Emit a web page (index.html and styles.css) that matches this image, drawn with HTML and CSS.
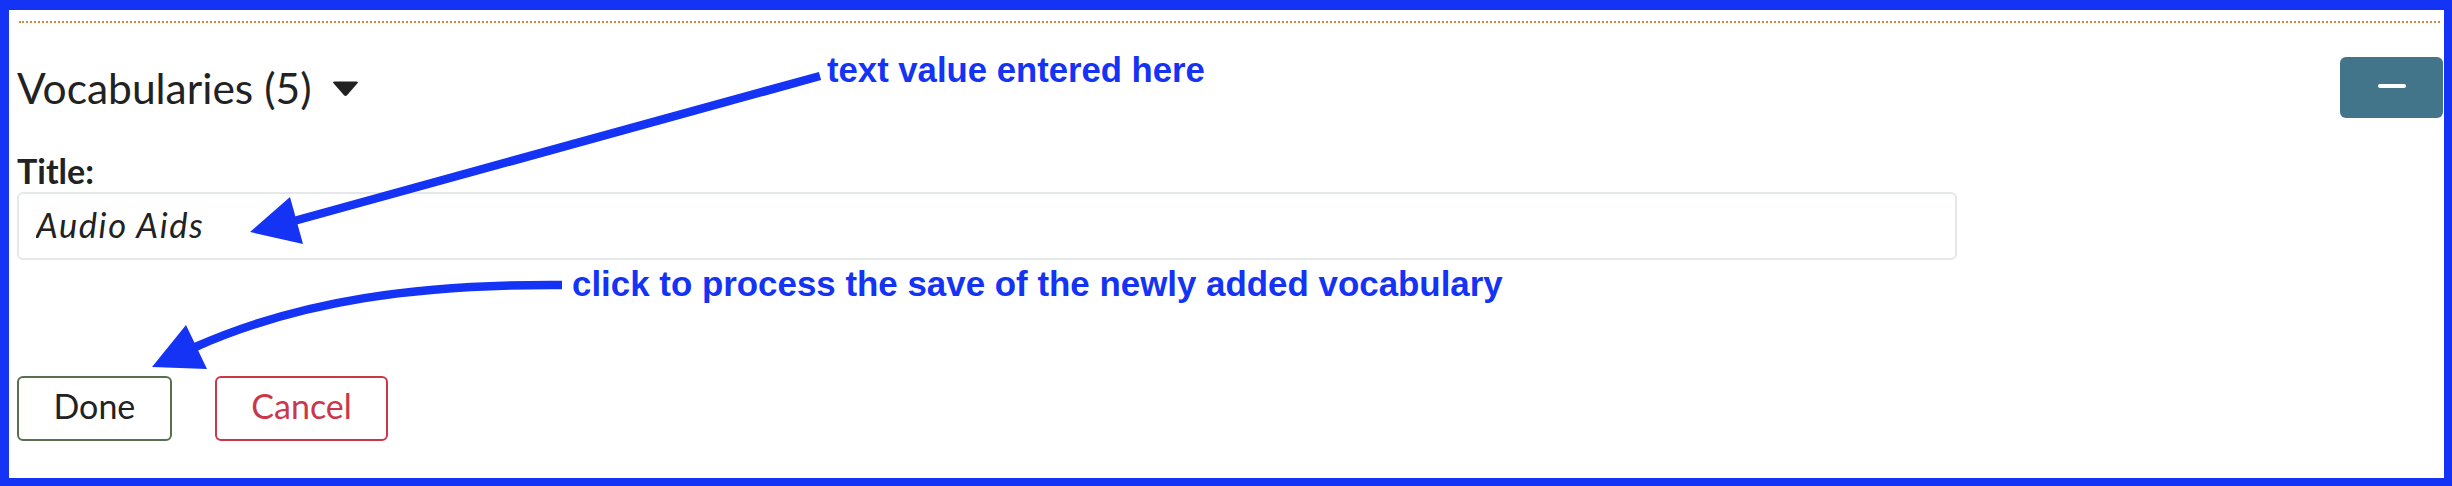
FILE: index.html
```html
<!DOCTYPE html>
<html lang="en">
<head>
<meta charset="utf-8">
<title>Vocabularies</title>
<link rel="stylesheet" href="styles.css">
</head>
<body>
<div class="page">
  <div class="frame">
    <div class="section">
      <div class="rule"></div>
      <div class="head-row">
        <h2 class="heading">
          <span>Vocabularies (5)</span>
          <svg class="caret" width="27" height="16" viewBox="0 0 27 16" aria-hidden="true"><path d="M2.5 0.5 H24.5 Q27 0.5 25.3 2.4 L15 14.2 Q13.5 15.8 12 14.2 L1.7 2.4 Q0 0.5 2.5 0.5 Z" fill="#222"/></svg>
        </h2>
        <button class="btn-minus" type="button" aria-label="Collapse"><span class="minus-bar"></span></button>
      </div>
      <form class="vocab-form">
        <label class="field-label" for="title">Title:</label>
        <input class="text-input" id="title" type="text" value="Audio Aids">
        <div class="actions">
          <button class="btn btn-done" type="button">Done</button>
          <button class="btn btn-cancel" type="button">Cancel</button>
        </div>
      </form>
    </div>
  </div>
  <svg class="annotations" width="2452" height="486" viewBox="0 0 2452 486">
    <g fill="#1533f5" stroke="none">
      <polygon points="250,232 290,197 303,244"/>
      <polygon points="152,367 186,325 207,369"/>
    </g>
    <g stroke="#1533f5" fill="none" stroke-width="8.5">
      <line x1="820" y1="76" x2="294" y2="221"/>
      <path d="M562 285 C420 284, 300 300, 193 348"/>
    </g>
    <g class="note-text" fill="#1533f5">
      <text x="827" y="82">text value entered here</text>
      <text class="note-long" x="572" y="296">click to process the save of the newly added vocabulary</text>
    </g>
  </svg>
</div>
</body>
</html>
```

FILE: styles.css
```css
html, body {
  margin: 0;
  padding: 0;
  background: #ffffff;
}

.page {
  position: relative;
  width: 2452px;
  height: 486px;
  overflow: hidden;
}

.frame {
  box-sizing: border-box;
  width: 2452px;
  height: 486px;
  border-style: solid;
  border-color: #1533f5;
  border-width: 10px 8px 8px 9px;
  background: #ffffff;
  font-family: Lato, "Open Sans", sans-serif;
  color: #222222;
}

.section {
  padding: 0 1px 0 8px;
}

.rule {
  margin: 11px 3px 0 2px;
  border-top: 2px dotted #d6893b;
}

.head-row {
  display: flex;
  align-items: center;
  justify-content: space-between;
  margin-top: 34px;
  height: 61px;
}

.heading {
  display: flex;
  align-items: center;
  gap: 21px;
  margin: 0;
  font-size: 42.5px;
  font-weight: 400;
  line-height: 1.2;
  color: #222222;
}

.caret {
  display: block;
  margin-top: 2px;
}

.btn-minus {
  display: flex;
  align-items: center;
  justify-content: center;
  width: 103px;
  height: 61px;
  padding: 0 0 3px;
  border: none;
  border-radius: 6px;
  background: #42758a;
}

.minus-bar {
  display: block;
  width: 28px;
  height: 4px;
  border-radius: 2px;
  background: #ffffff;
}

.vocab-form {
  margin: 0;
}

.field-label {
  display: block;
  margin-top: 32px;
  font-size: 34px;
  font-weight: 700;
  line-height: 41px;
  color: #222222;
}

.text-input {
  display: block;
  box-sizing: border-box;
  width: 1940px;
  height: 68px;
  margin: 1px 0 0;
  padding: 0 17px 4px;
  border: 2px solid #e5e8e9;
  border-radius: 6px;
  font-family: Lato, "Open Sans", sans-serif;
  font-size: 34.5px;
  font-style: italic;
  letter-spacing: 1.6px;
  color: #222222;
  background: #ffffff;
  outline: none;
}

.actions {
  display: flex;
  gap: 43px;
  margin-top: 116px;
}

.btn {
  box-sizing: border-box;
  height: 65px;
  padding: 0 34.5px 5px;
  border: 2px solid;
  border-radius: 6px;
  background: #ffffff;
  font-family: Lato, "Open Sans", sans-serif;
  font-size: 34px;
  line-height: 1;
}

.btn-done {
  border-color: #5a6f4e;
  color: #222222;
}

.btn-cancel {
  border-color: #cc3649;
  color: #cc3649;
}

.annotations {
  position: absolute;
  left: 0;
  top: 0;
}

.note-text {
  font-family: "Liberation Sans", Arial, sans-serif;
  font-weight: 700;
  font-size: 34.7px;
}

.note-long {
  font-size: 34.9px;
}
```
